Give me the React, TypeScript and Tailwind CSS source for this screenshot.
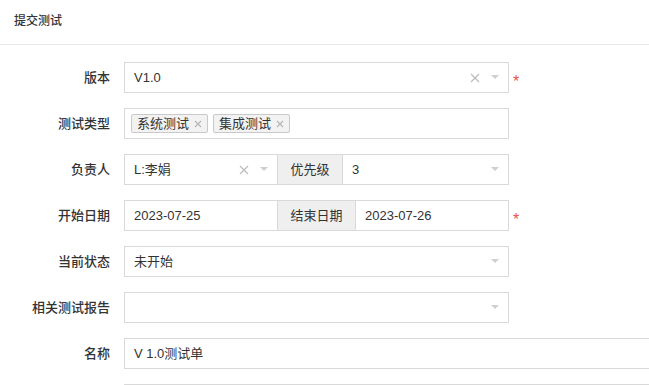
import React from "react";

const font = { fontFamily: '"Liberation Sans", "Noto Sans CJK SC", sans-serif' };

function Clear() {
  return (
    <svg width="10" height="10" viewBox="0 0 10 10" className="shrink-0">
      <path d="M1 1L9 9M9 1L1 9" stroke="#bdbdbd" strokeWidth="1.3" />
    </svg>
  );
}

function Caret() {
  return (
    <svg width="8" height="5" viewBox="0 0 8 5" className="shrink-0">
      <path d="M0 0H8L4 4Z" fill="#cfcfcf" />
    </svg>
  );
}

function Star() {
  return <span className="ml-[4px] mt-[8px] w-[8px] text-[16px] leading-[16px] text-[#e5534b]">*</span>;
}

function Row({ label, children, required }: { label: string; children: React.ReactNode; required?: boolean }) {
  return (
    <div className="flex items-center h-[31px]">
      <div className="w-[110px] shrink-0 text-right text-[13px] font-medium text-[#333]">{label}</div>
      <div className="ml-[14px] flex items-center">
        {children}
        {required && <Star />}
      </div>
    </div>
  );
}

function Select({ value, clear, width }: { value?: string; clear?: boolean; width: string }) {
  return (
    <div className={`${width} h-[31px] flex items-center border border-[#d9d9d9] bg-white pl-[9px] pr-[9px] text-[13px] text-[#333]`}>
      <span className="flex-1">{value}</span>
      {clear && <span className="mr-[11px] flex"><Clear /></span>}
      <Caret />
    </div>
  );
}

function Tag({ text }: { text: string }) {
  return (
    <span className="h-[19px] flex items-center gap-[5px] rounded-[2px] border border-[#c9c9c9] bg-[#f2f2f2] pl-[5px] pr-[5px] text-[13px] text-[#333]">
      {text}
      <svg width="8" height="8" viewBox="0 0 8 8">
        <path d="M1 1L7 7M7 1L1 7" stroke="#b5b5b5" strokeWidth="1.1" />
      </svg>
    </span>
  );
}

export default function App() {
  return (
    <div className="w-[649px] h-[385px] overflow-hidden bg-white" style={font}>
      <div className="h-[45px] flex items-center border-b border-[#e8e8e8] pl-[14px] pb-[2px]">
        <span className="text-[12px] font-medium text-[#333]">提交测试</span>
      </div>
      <div className="pt-[17px] flex flex-col gap-[15px]">
        <Row label="版本" required>
          <Select width="w-[385px]" value="V1.0" clear />
        </Row>
        <Row label="测试类型">
          <div className="w-[385px] h-[31px] flex items-center gap-[5px] border border-[#d9d9d9] pl-[6px]">
            <Tag text="系统测试" />
            <Tag text="集成测试" />
          </div>
        </Row>
        <Row label="负责人">
          <div className="flex">
            <Select width="w-[154px]" value="L:李娟" clear />
            <div className="h-[31px] w-[64px] flex items-center justify-center border-y border-[#d9d9d9] bg-[#efefef] text-[13px] text-[#333]">优先级</div>
            <Select width="w-[167px]" value="3" />
          </div>
        </Row>
        <Row label="开始日期" required>
          <div className="flex text-[13px] text-[#333]">
            <div className="w-[154px] h-[31px] flex items-center border border-[#d9d9d9] pl-[9px]">2023-07-25</div>
            <div className="h-[31px] w-[77px] flex items-center justify-center border-y border-[#d9d9d9] bg-[#efefef]">结束日期</div>
            <div className="w-[154px] h-[31px] flex items-center border border-[#d9d9d9] pl-[9px]">2023-07-26</div>
          </div>
        </Row>
        <Row label="当前状态">
          <Select width="w-[385px]" value="未开始" />
        </Row>
        <Row label="相关测试报告">
          <Select width="w-[385px]" />
        </Row>
        <Row label="名称">
          <div className="w-[540px] h-[31px] flex items-center border border-[#d9d9d9] pl-[9px] text-[13px] text-[#333]">V 1.0测试单</div>
        </Row>
        <Row label="">
          <div className="w-[540px] h-[31px] border border-[#d9d9d9]" />
        </Row>
      </div>
    </div>
  );
}
